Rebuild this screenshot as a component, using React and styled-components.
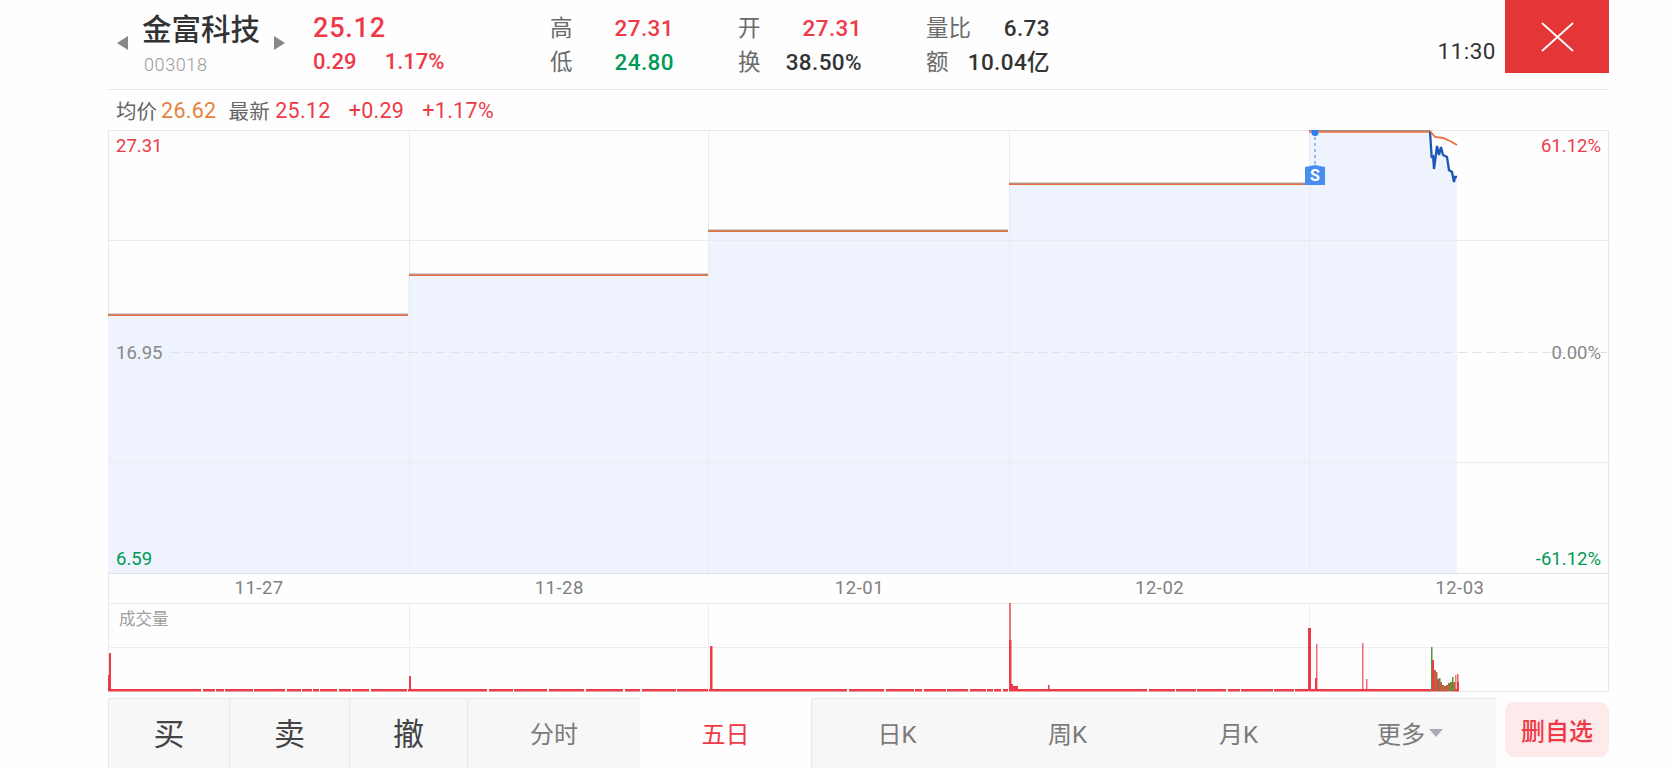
import React from "react"
import styled, { createGlobalStyle } from "styled-components"

const RED = "#ee3a48"
const GREEN = "#009a57"
const LINE = "#e8e8e8"
const FONT = `Roboto, "Noto Sans CJK SC", sans-serif`

const GlobalStyle = createGlobalStyle`
    html, body { margin: 0; background: #fefefe; overflow: hidden; }
    body { font-family: ${FONT}; }
`

const Page = styled.div`
    width: 1501px;
    height: 768px;
    margin-left: 108px;
    overflow: hidden;
`

// topo
const Header = styled.header`
    display: flex;
    height: 89px;
    border-bottom: 1px solid ${LINE};
`

const Arrow = styled.i`
    flex: none;
    width: 0;
    height: 0;
    margin-top: 36px;
    margin-left: ${p => p.$right ? 0 : 9}px;
    border-top: 7px solid transparent;
    border-bottom: 7px solid transparent;
    ${p => p.$right ? "border-left: 11px solid #888;" : "border-right: 11px solid #888;"}
`

const Title = styled.div`
    width: 132px;
    padding-left: 14px;
`

const Name = styled.div`
    margin-top: 11px;
    font-size: 29.5px;
    line-height: 38px;
    font-weight: 500;
    color: #333;
    white-space: nowrap;
`

const Code = styled.div`
    margin-top: 4px;
    padding-left: 2px;
    font-size: 18px;
    font-weight: 300;
    line-height: 24px;
    color: #9a9a9a;
    letter-spacing: 0.6px;
`

const Quote = styled.div`
    width: 237px;
    margin-left: 28px;
`

const Price = styled.div`
    margin-top: 11px;
    font-size: 27px;
    line-height: 34px;
    font-weight: 500;
    color: ${RED};
    letter-spacing: 0.8px;
`

const Change = styled.div`
    display: flex;
    gap: 28px;
    margin-top: 5px;
    font-size: 22px;
    line-height: 24px;
    font-weight: 500;
    color: ${RED};
`

const Stats = styled.div`
    display: grid;
    grid-template-columns: repeat(3, 124px);
    grid-template-rows: 34px 34px;
    column-gap: 64px;
    align-items: center;
    align-content: start;
    margin-top: 11px;
`

const Stat = styled.div`
    display: flex;
    justify-content: space-between;
    align-items: center;
    font-size: 22.5px;
    line-height: 30px;
    color: #6a6a6a;
`

const StatValue = styled.span`
    font-weight: 500;
    letter-spacing: 0.4px;
    color: ${p => p.$color};
`

const Clock = styled.div`
    margin-left: auto;
    margin-top: 35px;
    font-size: 22.5px;
    line-height: 32px;
    color: #333;
    letter-spacing: 0.5px;
`

const CloseButton = styled.button`
    display: flex;
    align-items: center;
    justify-content: center;
    flex: none;
    width: 104px;
    height: 73px;
    margin-left: 9px;
    padding: 0;
    border: 0;
    background: #e53637;
`

// legenda
const Legend = styled.div`
    display: flex;
    align-items: center;
    height: 40px;
    padding-left: 8px;
    font-size: 20.5px;
    color: #666;
    box-sizing: border-box;
`

const LegendValue = styled.span`
    margin-left: ${p => p.$gap}px;
    font-size: ${p => p.$label ? 20.5 : 21.5}px;
    letter-spacing: 0.3px;
    color: ${p => p.$color};
`

// grafico
const Chart = styled.div`
    position: relative;
    height: 443px;
    box-sizing: border-box;
    border: 1px solid ${LINE};
    border-bottom: 0;
`

const ChartSvg = styled.svg`
    display: block;
    position: absolute;
    left: -1px;
    top: -1px;
`

const AxisLabel = styled.span`
    position: absolute;
    top: ${p => p.$top}px;
    ${p => p.$right ? "right: 7px;" : "left: 7px;"}
    font-size: 18.5px;
    line-height: 20px;
    color: ${p => p.$color};
`

const MarkerBadge = styled.span`
    position: absolute;
    left: 1196px;
    top: 34px;
    width: 20px;
    height: 20px;
    text-align: center;
    font-size: 16px;
    font-weight: 700;
    line-height: 21px;
    color: #fff;
    background: #4a8df0;
    clip-path: polygon(0 2px, 50% 0, 100% 2px, 100% 100%, 0 100%);
`

const DateAxis = styled.div`
    display: grid;
    grid-template-columns: repeat(5, 300.2px);
    height: 31px;
    box-sizing: border-box;
    border: 1px solid ${LINE};
    border-top-color: #dfe3e8;
`

const DateLabel = styled.span`
    text-align: center;
    font-size: 18.5px;
    line-height: 29px;
    letter-spacing: 0.5px;
    color: #808080;
`

const Volume = styled.div`
    position: relative;
    height: 88px;
    box-sizing: border-box;
    border: 1px solid ${LINE};
    border-top: 0;
`

const VolumeTitle = styled.span`
    position: absolute;
    left: 10px;
    top: 4px;
    font-size: 16.5px;
    line-height: 24px;
    color: #a0a0a0;
`

// rodape
const Footer = styled.footer`
    display: flex;
    margin-top: 6px;
`

const Tabs = styled.nav`
    display: flex;
    width: 1388px;
    height: 72px;
    box-sizing: border-box;
    border-right: 1px solid ${LINE};
`

const Tab = styled.div`
    display: flex;
    align-items: center;
    justify-content: center;
    flex: none;
    gap: 2px;
    width: ${p => p.$width}px;
    height: 72px;
    box-sizing: border-box;
    padding-bottom: ${p => p.$big ? 6 : 4}px;
    background: ${p => p.$active ? "#fefefe" : "#f7f7f7"};
    border-top: ${p => p.$active ? "0" : `1px solid ${LINE}`};
    border-left: ${p => p.$active || p.$noLine ? "0" : `1px solid ${LINE}`};
    font-size: ${p => p.$big ? 31 : 24}px;
    color: ${p => p.$active ? RED : p.$big ? "#444" : "#7b7b7b"};
`

const Caret = styled.i`
    width: 0;
    height: 0;
    margin: 1px 0 0 2px;
    border-left: 7px solid transparent;
    border-right: 7px solid transparent;
    border-top: 8px solid #a8acb2;
`

const RemoveButton = styled.button`
    width: 104px;
    height: 55px;
    margin: 4px 0 0 9px;
    padding: 0;
    border: 0;
    border-radius: 9px;
    background: #fdeaea;
    font-family: ${FONT};
    font-size: 24px;
    font-weight: 500;
    color: ${RED};
`

const STATS = [
    ["高", "27.31", RED], ["开", "27.31", RED], ["量比", "6.73", "#333"],
    ["低", "24.80", GREEN], ["换", "38.50%", "#333"], ["额", "10.04亿", "#333"],
]

const GRID_X = [301, 600, 901, 1201]
const STEPS = [[0, 300, 185], [301, 600, 145], [600, 900, 101], [901, 1197, 54]]
const PRICE = "1322,1 1323.7,28 1325,25 1326,39 1329,16 1331,25 1333,17 1335,25 1339,27 1341,40 1344,42 1346,52 1347,47 1349,47"
const AVERAGE = "1322,1 1327,7 1335,8 1342,11 1349,15"

// barras de volume: x, topo, largura, cor, opacidade
const BARS = [
    [1, 50, 2, RED, 1], [0, 72, 2, RED, 1], [301, 73, 2, RED, 1], [602, 43, 2.5, RED, 1],
    [901, 0, 2, RED, 0.7], [901, 37, 2.5, RED, 1], [903, 81, 2, RED, 1], [905, 83, 5, RED, 1],
    [940, 82, 1.5, RED, 1], [1200, 25, 3, RED, 1], [1208, 41, 1.5, RED, 0.75], [1207, 75, 2, RED, 1],
    [1254, 40, 1.5, RED, 0.75], [1258, 76, 1.5, RED, 0.75], [1323, 44, 1.5, "#4f9a3c", 1],
    [1324, 57, 2, RED, 1], [1326, 67, 2, "#b8643f", 1], [1328, 69, 1.5, "#b8643f", 1], [1329, 76, 2, RED, 1],
    [1331, 75, 1.5, "#4f9a3c", 1], [1332, 79, 2, "#b8643f", 1], [1334, 82, 2, "#b8643f", 1], [1336, 83, 2, "#b8643f", 1],
    [1338, 82, 2, "#b8643f", 1], [1340, 80, 2, "#b8643f", 1], [1342, 79, 2, "#4f9a3c", 1], [1344, 74, 1.5, "#4f9a3c", 1],
    [1345, 79, 2, "#b8643f", 1], [1347, 72, 1.5, RED, 0.7], [1349, 71, 1.5, RED, 0.8], [1349, 79, 2, RED, 1],
]

const baseline = () => {
    const parts = []
    const days = [[70, 300], [370, 600], [700, 900], [1000, 1200]]
    let x = 0
    let seed = 7
    days.forEach(([from, to]) => {
        let cursor = from
        while (cursor < to) {
            seed = (seed * 73 + 11) % 101
            const len = 6 + seed % 34
            const end = Math.min(cursor + len, to)
            parts.push([x, end])
            x = end + 1 + seed % 2
            cursor = x
        }
        parts.push([x, to + 1])
        x = to + 1
    })
    parts.push([x, 1351])
    return parts
}

function PriceChart() {
    return <ChartSvg width="1501" height="443" viewBox="0 0 1501 443">
        <path d={`M0 443V185H300V145H600V101H901V54H1201V1H1322L${PRICE.replace(/ /g, "L").replace(/,/g, " ")}V443Z`} fill="#eef3fd" />
        {[110.5, 332.5].map(y => <line key={y} x1="0" x2="1501" y1={y} y2={y} stroke="#e9ebee" />)}
        {GRID_X.map(x => <line key={x} x1={x + 0.5} x2={x + 0.5} y1="0" y2="443" stroke="#e9ebef" />)}
        <line x1="62" x2="1501" y1="222.5" y2="222.5" stroke="#dfe3e8" strokeDasharray="9 5" />
        {STEPS.map(([a, b, y]) => <g key={a}>
            <line x1={a} x2={b} y1={y - 0.8} y2={y - 0.8} stroke="#8a6a5a" strokeWidth="1" />
            <line x1={a} x2={b} y1={y + 0.4} y2={y + 0.4} stroke="#e8703f" strokeWidth="1.4" />
        </g>)}
        <line x1="1201" x2="1322" y1="0.8" y2="0.8" stroke="#8a6a5a" strokeWidth="1.2" />
        <line x1="1201" x2="1322" y1="2" y2="2" stroke="#e8703f" strokeWidth="1.4" />
        <polyline points={PRICE} fill="none" stroke="#1d56b5" strokeWidth="2.3" />
        <polyline points={AVERAGE} fill="none" stroke="#e8703f" strokeWidth="1.8" />
        <circle cx="1207" cy="2.5" r="3.5" fill="#2f7df0" />
        <line x1="1207" x2="1207" y1="7" y2="34" stroke="#70a5f0" strokeWidth="1.4" strokeDasharray="3 3" />
    </ChartSvg>
}

function VolumeChart() {
    return <ChartSvg width="1501" height="89" viewBox="0 0 1501 89">
        <line x1="0" x2="1501" y1="44.5" y2="44.5" stroke="#eeeeee" />
        {GRID_X.map(x => <line key={x} x1={x + 0.5} x2={x + 0.5} y1="0" y2="89" stroke="#eeeeee" />)}
        {baseline().map(([a, b]) => <rect key={a} x={a} y="86" width={b - a} height="2.4" fill={RED} />)}
        {BARS.map(([x, top, w, color, opacity], i) =>
            <rect key={i} x={x} y={top} width={w} height={88 - top} fill={color} opacity={opacity} />)}
    </ChartSvg>
}

export default function App() {
    return <Page>
        <GlobalStyle />

        <Header>
            <Arrow />
            <Title>
                <Name>金富科技</Name>
                <Code>003018</Code>
            </Title>
            <Arrow $right />
            <Quote>
                <Price>25.12</Price>
                <Change><span>0.29</span><span>1.17%</span></Change>
            </Quote>
            <Stats>
                {STATS.map(([label, value, color]) => <Stat key={label}>
                    <span>{label}</span>
                    <StatValue $color={color}>{value}</StatValue>
                </Stat>)}
            </Stats>
            <Clock>11:30</Clock>
            <CloseButton aria-label="fechar">
                <svg width="33" height="30" viewBox="0 0 33 30">
                    <path d="M1 1L32 29M32 1L1 29" stroke="#fff" strokeWidth="1.8" fill="none" />
                </svg>
            </CloseButton>
        </Header>

        <Legend>
            均价<LegendValue $gap={4} $color="#e5823f">26.62</LegendValue>
            <LegendValue $label $gap={12} $color="#666">最新</LegendValue>
            <LegendValue $gap={5} $color={RED}>25.12</LegendValue>
            <LegendValue $gap={18} $color={RED}>+0.29</LegendValue>
            <LegendValue $gap={18} $color={RED}>+1.17%</LegendValue>
        </Legend>

        <Chart>
            <PriceChart />
            <AxisLabel $top={5} $color={RED}>27.31</AxisLabel>
            <AxisLabel $top={212} $color="#888">16.95</AxisLabel>
            <AxisLabel $top={418} $color={GREEN}>6.59</AxisLabel>
            <AxisLabel $right $top={5} $color={RED}>61.12%</AxisLabel>
            <AxisLabel $right $top={212} $color="#888">0.00%</AxisLabel>
            <AxisLabel $right $top={418} $color={GREEN}>-61.12%</AxisLabel>
            <MarkerBadge>S</MarkerBadge>
        </Chart>

        <DateAxis>
            {["11-27", "11-28", "12-01", "12-02", "12-03"].map(d => <DateLabel key={d}>{d}</DateLabel>)}
        </DateAxis>

        <Volume>
            <VolumeChart />
            <VolumeTitle>成交量</VolumeTitle>
        </Volume>

        <Footer>
            <Tabs>
                <Tab $big $width={121}>买</Tab>
                <Tab $big $width={120}>卖</Tab>
                <Tab $big $width={118}>撤</Tab>
                <Tab $width={173}>分时</Tab>
                <Tab $active $width={171}>五日</Tab>
                <Tab $width={171}>日K</Tab>
                <Tab $noLine $width={171}>周K</Tab>
                <Tab $noLine $width={171}>月K</Tab>
                <Tab $noLine $width={172}>更多<Caret /></Tab>
            </Tabs>
            <RemoveButton>删自选</RemoveButton>
        </Footer>
    </Page>
}
